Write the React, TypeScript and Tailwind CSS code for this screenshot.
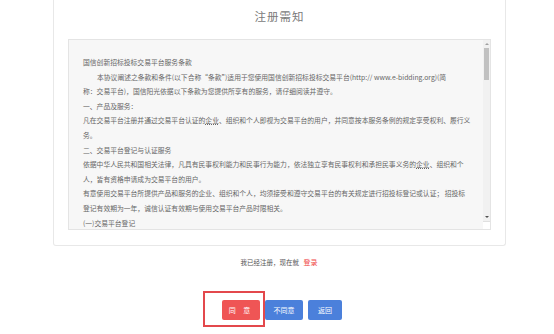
const font = { fontFamily: '"Noto Sans CJK SC", "Noto Sans", sans-serif' };

const lines: { text: React.ReactNode; indent?: boolean }[] = [
  { text: '国信创新招标投标交易平台服务条款' },
  {
    text: '本协议阐述之条款和条件(以下合称“条款”)适用于您使用国信创新招标投标交易平台(http:// www.e-bidding.org)(简',
    indent: true,
  },
  { text: '称：交易平台)，国信阳光依据以下条款为您提供所享有的服务，请仔细阅读并遵守。' },
  { text: '一、产品及服务：' },
  {
    text: (
      <>
        凡在交易平台注册并通过交易平台认证的<span className="underline decoration-dotted">企业</span>、组织和个人即视为交易平台的用户，并同意按本服务条例的规定享受权利、履行义
      </>
    ),
  },
  { text: '务。' },
  { text: '二、交易平台登记与认证服务' },
  {
    text: (
      <>
        依据中华人民共和国相关法律，凡具有民事权利能力和民事行为能力，依法独立享有民事权利和承担民事义务的<span className="underline decoration-dotted">企业</span>、组织和个
      </>
    ),
  },
  { text: '人，皆有资格申请成为交易平台的用户。' },
  { text: '有意使用交易平台所提供产品和服务的企业、组织和个人，均须接受和遵守交易平台的有关规定进行招投标登记或认证； 招投标' },
  { text: '登记有效期为一年，诚信认证有效期与使用交易平台产品时限相关。' },
  { text: '(一)交易平台登记' },
];

export default function App() {
  return (
    <div className="relative h-[334px] w-full overflow-hidden bg-white" style={font}>
      {/* card */}
      <div className="ml-[53px] h-[246px] w-[453px] rounded-b-[3px] border border-t-0 border-[#e8e8e8] px-[14px] pt-[8px]">
        <h1 className="text-center text-[11.5px] leading-[16px] tracking-[1px] text-[#7a7a7a]">注册需知</h1>

        <div className="mt-[15px] flex h-[191px] border border-[#e4e4e4] bg-[#f7f7f7]">
          <div className="flex-1 overflow-hidden pl-[14px] pt-[15px] text-[6.8px] leading-[14.6px] text-[#666]">
            {lines.map((l, i) => (
              <div key={i} className={`whitespace-nowrap ${l.indent ? 'pl-[14px]' : ''}`}>
                {l.text}
              </div>
            ))}
          </div>

          {/* scrollbar */}
          <div className="flex w-[7px] flex-col bg-[#f1f1f1]">
            <div className="flex h-[8px] items-center justify-center">
              <div className="h-0 w-0 border-x-[2px] border-b-[2px] border-x-transparent border-b-[#a0a0a0]" />
            </div>
            <div className="mx-[1px] h-[32px] bg-[#c1c1c1]" />
            <div className="flex-1" />
            <div className="flex h-[8px] items-center justify-center">
              <div className="h-0 w-0 border-x-[2px] border-t-[2px] border-x-transparent border-t-[#505050]" />
            </div>
            <div className="h-[8px] border-t border-[#e0e0e0] bg-white" />
          </div>
        </div>
      </div>

      <p className="mt-[11px] pl-[4px] text-center text-[6.5px] leading-[10px] text-[#555]">
        我已经注册，现在就 <span className="ml-[3px] text-[7px] text-[#f04848]">登录</span>
      </p>

      <div className="mt-[33px] flex gap-[5px] pl-[222px]">
        <button className="h-[20px] w-[38px] rounded-[2px] bg-[#ef5555] text-[7px] tracking-[3px] text-white">同 意</button>
        <button className="h-[20px] w-[38px] rounded-[2px] bg-[#4b80db] text-[7px] text-white">不同意</button>
        <button className="h-[20px] w-[34px] rounded-[2px] bg-[#4b80db] text-[7px] text-white">返回</button>
      </div>

      {/* highlight annotation */}
      <div className="absolute left-[203px] top-[291px] h-[36px] w-[62px] border-2 border-[#e3484c]" />
    </div>
  );
}
